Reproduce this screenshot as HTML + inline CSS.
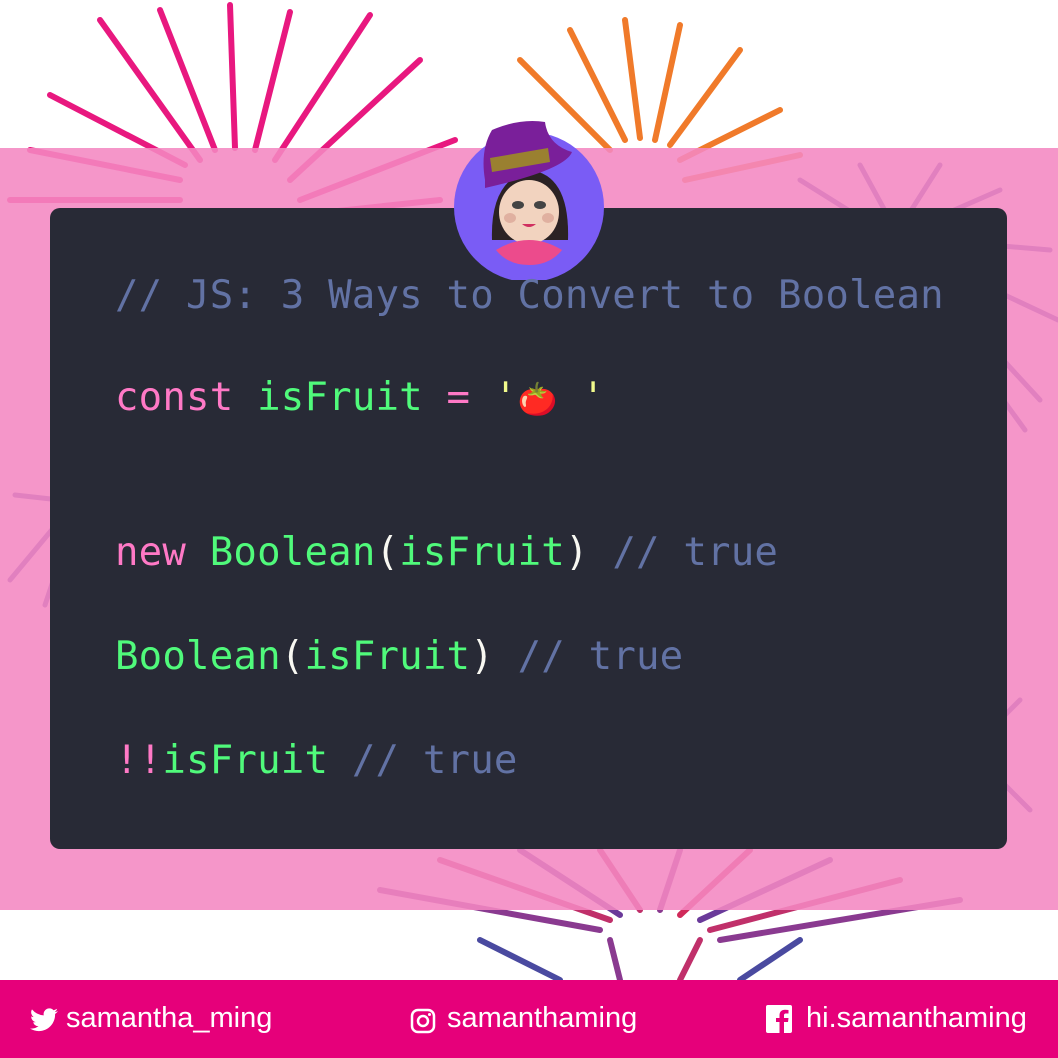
<!DOCTYPE html>
<html><head><meta charset="utf-8"><style>
html,body{margin:0;padding:0;width:1058px;height:1058px;overflow:hidden;background:#fff;position:relative;font-family:"Liberation Sans",sans-serif}
.abs{position:absolute}
#band{left:0;top:148px;width:1058px;height:762px;background:#f487c2;opacity:.88}
#card{left:50px;top:208px;width:957px;height:641px;background:#282a36;border-radius:10px}
.code{position:absolute;left:115px;font-family:"DejaVu Sans Mono","Liberation Mono",monospace;font-size:39px;letter-spacing:0.2px;white-space:pre;color:#f8f8f2}
.c{color:#6272a4}.p{color:#ff79c6}.g{color:#50fa7b}
#foot{left:0;top:980px;width:1058px;height:78px;background:#e6007a;color:#fff;font-size:29px}
#foot span{position:absolute;top:22px}
</style></head><body>
<svg class="abs" style="left:0;top:0" width="1058" height="1058">
<g stroke="#e8187f" stroke-width="6" stroke-linecap="round">
<line x1="200" y1="160" x2="100" y2="20"/><line x1="215" y1="150" x2="160" y2="10"/><line x1="235" y1="148" x2="230" y2="5"/><line x1="255" y1="150" x2="290" y2="12"/><line x1="275" y1="160" x2="370" y2="15"/><line x1="290" y1="180" x2="420" y2="60"/><line x1="300" y1="200" x2="455" y2="140"/><line x1="180" y1="180" x2="30" y2="150"/><line x1="185" y1="165" x2="50" y2="95"/><line x1="180" y1="200" x2="10" y2="200"/><line x1="300" y1="215" x2="440" y2="200"/>
</g>
<g stroke="#f07a2a" stroke-width="6" stroke-linecap="round">
<line x1="610" y1="150" x2="520" y2="60"/><line x1="625" y1="140" x2="570" y2="30"/><line x1="640" y1="138" x2="625" y2="20"/><line x1="655" y1="140" x2="680" y2="25"/><line x1="670" y1="145" x2="740" y2="50"/><line x1="680" y1="160" x2="780" y2="110"/><line x1="685" y1="180" x2="800" y2="155"/>
</g>
<g stroke="#5a4aa8" stroke-width="5" stroke-linecap="round">
<line x1="880" y1="230" x2="800" y2="180"/><line x1="890" y1="220" x2="860" y2="165"/><line x1="905" y1="220" x2="940" y2="165"/><line x1="920" y1="225" x2="1000" y2="190"/><line x1="930" y1="240" x2="1050" y2="250"/><line x1="930" y1="260" x2="1058" y2="320"/><line x1="925" y1="275" x2="1040" y2="400"/><line x1="920" y1="285" x2="1025" y2="430"/>
<line x1="60" y1="520" x2="10" y2="580"/><line x1="60" y1="500" x2="15" y2="495"/><line x1="60" y1="560" x2="45" y2="605"/>
<line x1="1000" y1="720" x2="1020" y2="700"/><line x1="1000" y1="780" x2="1030" y2="810"/>
</g>
<g stroke-width="6" stroke-linecap="round">
<line x1="600" y1="930" x2="380" y2="890" stroke="#8a3a90"/><line x1="610" y1="920" x2="440" y2="860" stroke="#c0306a"/><line x1="620" y1="915" x2="520" y2="850" stroke="#6a3a9a"/><line x1="640" y1="910" x2="600" y2="850" stroke="#c0306a"/><line x1="660" y1="910" x2="680" y2="850" stroke="#8a3a90"/><line x1="680" y1="915" x2="750" y2="850" stroke="#d02a5a"/><line x1="700" y1="920" x2="830" y2="860" stroke="#6a3a9a"/><line x1="710" y1="930" x2="900" y2="880" stroke="#c0306a"/><line x1="720" y1="940" x2="960" y2="900" stroke="#8a3a90"/>
<line x1="560" y1="980" x2="480" y2="940" stroke="#4a4aa0"/><line x1="620" y1="980" x2="610" y2="940" stroke="#8a3a90"/><line x1="680" y1="980" x2="700" y2="940" stroke="#c0306a"/><line x1="740" y1="980" x2="800" y2="940" stroke="#4a4aa0"/>
</g>
</svg>
<div id="band" class="abs"></div>
<div id="card" class="abs"></div>
<svg class="abs" style="left:440px;top:100px" width="180" height="180">
<circle cx="89" cy="107" r="75" fill="#7a5cf5"/>
<path d="M52 140 Q50 80 90 70 Q130 75 128 140 Z" fill="#2b2224"/>
<ellipse cx="89" cy="112" rx="30" ry="32" fill="#f2d3bf"/>
<ellipse cx="70" cy="118" rx="6" ry="5" fill="#e0b0a0"/><ellipse cx="108" cy="118" rx="6" ry="5" fill="#e0b0a0"/>
<path d="M56 150 Q89 130 122 150 Q110 165 89 165 Q68 165 56 150Z" fill="#ec4b8c"/>
<ellipse cx="78" cy="105" rx="6" ry="4" fill="#444"/><ellipse cx="100" cy="105" rx="6" ry="4" fill="#444"/>
<path d="M82 124 Q89 130 96 124 Z" fill="#d03060"/>
<path d="M45 80 Q40 50 52 30 Q80 18 105 22 Q108 45 132 52 Q125 70 45 88Z" fill="#7a1f9a"/>
<path d="M50 58 L108 48 L110 62 L52 72Z" fill="#9a8030"/>
</svg>
<div class="code c" style="top:273px">// JS: 3 Ways to Convert to Boolean</div>
<div class="code" style="top:375px"><span class="p">const</span> <span class="g">isFruit</span> <span class="p">=</span> <span style="color:#f1fa8c">'</span><span style="font-size:32px">🍅</span> <span style="color:#f1fa8c">'</span></div>
<div class="code" style="top:530px"><span class="p">new</span> <span class="g">Boolean</span>(<span class="g">isFruit</span>) <span class="c">// true</span></div>
<div class="code" style="top:634px"><span class="g">Boolean</span>(<span class="g">isFruit</span>) <span class="c">// true</span></div>
<div class="code" style="top:738px"><span class="p">!!</span><span class="g">isFruit</span> <span class="c">// true</span></div>
<div id="foot" class="abs">
<svg class="abs" style="left:30px;top:28px" width="28" height="24" viewBox="0 0 24 20"><path fill="#fff" d="M24 2.4a10 10 0 0 1-2.8.8A5 5 0 0 0 23.3.4a10 10 0 0 1-3.1 1.2A4.9 4.9 0 0 0 11.8 6 14 14 0 0 1 1.7.9a4.9 4.9 0 0 0 1.5 6.6A4.9 4.9 0 0 1 1 6.9a4.9 4.9 0 0 0 3.9 4.9 5 5 0 0 1-2.2.1 4.9 4.9 0 0 0 4.6 3.4A9.9 9.9 0 0 1 0 17.3 14 14 0 0 0 7.5 19.5c9 0 14-7.5 14-14v-.6A10 10 0 0 0 24 2.4z"/></svg>
<span style="left:66px">samantha_ming</span>
<svg class="abs" style="left:410px;top:28px" width="26" height="26" viewBox="0 0 26 26"><rect x="2" y="2" width="22" height="22" rx="6" fill="none" stroke="#fff" stroke-width="2.5"/><circle cx="13" cy="13" r="5" fill="none" stroke="#fff" stroke-width="2.5"/><circle cx="19.5" cy="6.5" r="1.5" fill="#fff"/></svg>
<span style="left:447px">samanthaming</span>
<svg class="abs" style="left:766px;top:25px" width="26" height="28" viewBox="0 0 26 28"><rect width="26" height="28" rx="2" fill="#fff"/><path d="M18 28V17h4l.5-4H18v-2.5c0-1.2.4-2 2-2h2.5V5a30 30 0 0 0-3.5-.2c-3.5 0-5.5 2-5.5 5.8V13H10v4h3.5v11z" fill="#e6007a"/></svg>
<span style="left:806px">hi.samanthaming</span>
</div>
</body></html>
